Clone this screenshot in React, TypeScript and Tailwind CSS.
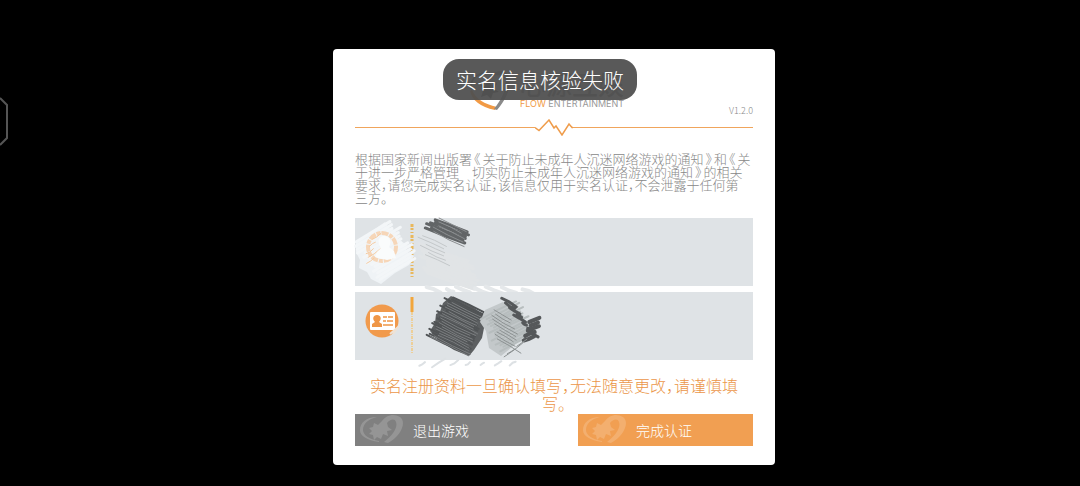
import React from 'react'

interface IScribble {
  points: [number, number, number, number][]
  color: string
  width: number
  seed: number
}

// Hand-drawn marker strokes: each band is x, y, length and slope
const Scribble = ({ points, color, width, seed }: IScribble) => {
  const noise = (n: number) => {
    const v = Math.sin(n * 12.9898 + seed) * 43758.5453
    return v - Math.floor(v)
  }

  return (
    <g stroke={color} strokeWidth={width} strokeLinecap="round" fill="none">
      {points.map(([x, y, length, slope], i) => {
        const start = x + noise(i) * 8 - 4
        const end = x + length + noise(i + 50) * 8 - 4
        const mid = (start + end) / 2
        return (
          <path
            key={i}
            d={`M${start} ${y + (start - x) * slope}L${mid} ${y + (mid - x) * slope + noise(i + 90) * 2 - 1}L${end} ${y + (end - x) * slope}`}
          />
        )
      })}
    </g>
  )
}

const bands = (
  count: number,
  x: number,
  y: number,
  stepX: number,
  stepY: number,
  length: number,
  slope: number
): [number, number, number, number][] =>
  Array.from({ length: count }, (_, i) => [x + i * stepX, y + i * stepY, length, slope])

const HeartMark = () => (
  <svg viewBox="0 0 46 32" className="h-8 w-[46px] shrink-0" aria-hidden="true">
    <g fill="#fff" fillOpacity=".17">
      <path d="M18 3C7 3 1 9 1 16c0 6 7 10 19 12v-1C10 25 4 21 4 16c0-6 5-11 14-13z" />
      <path d="M23 7c4-6 12-8 18-4 7 5 1 19-12 26l-4-1c9-7 14-15 12-20-1-4-6-3-9 1l1 4 4 3-5 1 1 5-5-2-2 5-4-2-3 3-1-5-4-1 3-3-3-3 4-1 1-4 4 2z" />
    </g>
  </svg>
)

const Logo = () => (
  <div className="flex items-start gap-2">
    <svg viewBox="0 0 44 42" className="h-[42px] w-[44px]" fill="none" aria-hidden="true">
      <path d="M2 22c2 9 10 16 25 19l2-3C16 35 8 30 4 21z" fill="#f19a45" />
      <path d="M22 4C9 3 2 10 3 20" stroke="#777" strokeWidth="2" />
      <path d="M21 8c6-7 15-8 19-2 5 9-1 24-11 35l-3-1c9-11 13-22 11-29-2-5-9-6-16-3z" fill="#8a8a8a" />
      <path d="M12 15l5 2 2-6 5 5 5-2-2 6 4 3-6 1-2 6-4-4-6 2 2-6z" fill="#555" />
    </svg>
    <div>
      <p className="text-[26px] leading-[30px] font-medium text-[#777]">心源互娱</p>
      <p className="text-[9px] leading-[10px] whitespace-nowrap font-[Inter,sans-serif] text-[#999]">
        <span className="text-[#f19a45]">FLOW</span> ENTERTAINMENT
      </p>
    </div>
  </div>
)

const Pulse = () => (
  <div className="flex items-center" aria-hidden="true">
    <span className="h-px flex-1 bg-[#f0a55c]" />
    <svg viewBox="0 0 38 17" className="h-[17px] w-[38px]" fill="none" stroke="#ef9c4b" strokeWidth="1.5">
      <path d="M0 8.500l4 3L14 1l5 8 2-2 6 9 7-11 3 3.500h1" />
    </svg>
    <span className="h-px flex-1 bg-[#f0a55c]" />
  </div>
)

const NameField = () => (
  <div className="relative h-[68px] bg-[#dfe3e6]">
    <input aria-label="姓名" className="h-full w-full bg-transparent pr-4 pl-[70px] text-base text-[#555] outline-none" />
    <svg viewBox="0 0 220 90" className="pointer-events-none absolute -top-2 -left-2.5 h-[90px] w-[220px]" aria-hidden="true">
      <path d="M67 14v55" stroke="#e9b85c" strokeWidth="3" strokeDasharray="3 1 2 2 1 2" />
      <path d="M11 32l29-20 4 6 6 2 3 9 9 6-1 6 8 5-5 9-14 8-14 11-10-5-4-7-8-4 1-8-4-8z" fill="#eff3f6" />
      <Scribble points={bands(14, 11, 32, 1.8, 2.9, 36, -0.6)} color="#f3f6f8" width={3} seed={2} />
      <circle cx="37" cy="37" r="14" fill="none" stroke="#f6d6b8" strokeWidth="4" strokeDasharray="7 1 4 1" />
      <Scribble points={bands(5, 25, 31, 0, 5, 7, -0.7)} color="#f5cba2" width={1} seed={21} />
      <path d="M39 26c6 0 8 6 5 11l5 4 2 7-9 2-12-3 2-5 4-4c-4-5-3-12 3-12z" fill="#fafcfc" />
      <Scribble points={bands(14, 75, 34, 0.5, 2.2, 50, 0.35)} color="#e1e4e6" width={3} seed={4} />
      <Scribble points={bands(6, 76, 25, 1, 4, 22, 0.45)} color="#c4c8ca" width={1} seed={9} />
      <Scribble points={bands(6, 88, 9, -1, 2, 36, 0.38)} color="#626567" width={3} seed={7} />
      <Scribble points={bands(5, 92, 7, 0, 4, 28, 0.5)} color="#8b8e90" width={1} seed={16} />
      <Scribble points={bands(7, 84, 78, 15, 0, 12, 0.4)} color="#e5e8ea" width={4} seed={3} />
    </svg>
  </div>
)

const IdCardField = () => (
  <div className="relative h-[68px] bg-[#dfe3e6]">
    <input aria-label="身份证号" className="h-full w-full bg-transparent pr-4 pl-[70px] text-base text-[#555] outline-none" />
    <svg viewBox="0 0 220 90" className="pointer-events-none absolute -top-2 -left-2.5 h-[90px] w-[220px]" aria-hidden="true">
      <circle cx="37" cy="37" r="16.5" fill="#f19a4c" />
      <rect x="25" y="28" width="25" height="18" rx="1" fill="#fff" />
      <path d="M32 31c4 0 5 4 2 7l3 2v3H27v-3l3-2c-3-3-2-7 2-7z" fill="#ef9646" />
      <path d="M38 33h4m1 0h5M38 37h3m1 0h6M38 41h10" stroke="#ef9646" strokeWidth="1.5" />
      <path d="M45 50l8-7m-5 7l6-8" stroke="#eee2d5" strokeWidth="2" />
      <path d="M67 13v15" stroke="#f2a63c" strokeWidth="3" />
      <path d="M67 28v42" stroke="#edcf99" strokeWidth="2" strokeDasharray="3 1 1 1" />
      <Scribble points={bands(7, 74, 82, 15, 0, 9, -0.65)} color="#dde1e4" width={2} seed={1} />
      <path d="M106 12l13 7 9 4 8 6 6 3-3 12-2 10-8 12-5 6-15-6-16-10-8-9 5-8 1-9 4-2 3-9z" fill="#5c5f61" />
      <Scribble points={bands(22, 105, 12, -1, 1.900, 35, 0.48)} color="#505355" width={2} seed={5} />
      <Scribble points={bands(18, 104, 17, -0.9, 2.200, 32, 0.5)} color="#7b7e80" width={1} seed={8} />
      <path d="M140 26l18-8 8 5 5 8 8 5 9 9-12 10-9 8-11 9-12-8-3-17-6-9z" fill="#c3c8ca" />
      <Scribble points={bands(15, 138, 34, 1.400, 2.300, 32, -0.5)} color="#b7bdbe" width={2} seed={6} />
      <Scribble points={bands(8, 158, 15, 3.500, 4.500, 10, 0.6)} color="#55585a" width={3} seed={12} />
      <Scribble points={bands(5, 184, 38, -1, 4.500, 9, -0.4)} color="#55585a" width={4} seed={14} />
      <Scribble points={bands(9, 146, 24, 1, 4, 20, 0.6)} color="#8d9293" width={1} seed={11} />
      <Scribble points={bands(3, 156, 75, 6, -5, 12, -0.7)} color="#8d9293" width={1} seed={18} />
    </svg>
  </div>
)

const Toast = ({ message }: { message: string }) => (
  <div
    role="status"
    className="absolute inset-x-0 top-2.5 flex justify-center pr-7"
  >
    <span className="rounded-2xl bg-[#505050]/95 px-[13px] py-2 text-[21px] leading-[25px] font-light whitespace-nowrap text-white">
      {message}
    </span>
  </div>
)

const App = () => {
  return (
    <div className="relative min-h-screen bg-black pt-[49px] pb-5 pl-7 font-['Noto_Sans_CJK_SC',sans-serif]">
      <svg viewBox="0 0 9 50" className="absolute top-[96px] left-0 h-[50px] w-[9px]" fill="none" aria-hidden="true">
        <path d="M0 2l7 7v33l-7 7" stroke="#555" strokeWidth="2" />
      </svg>

      <main className="relative mx-auto w-full max-w-[442px] rounded-sm bg-white px-[22px] pt-5 pb-[19px]">
        <header className="relative flex h-[50px] justify-center pr-4">
          <Logo />
          <span className="absolute right-0 bottom-0 text-[9px] leading-4 font-light text-[#888]">V1.2.0</span>
        </header>
        <Pulse />

        <p className="mt-4 h-[54px] text-[13px] leading-[13px] font-light whitespace-nowrap text-[#888] [font-feature-settings:'halt']">
          根据国家新闻出版署<span className="mx-0.5">《</span>关于防止未成年人沉迷网络游戏的通知<span className="mx-0.5">》</span>和<span className="mx-0.5">《</span>关
          <br />
          于进一步严格管理　切实防止未成年人沉迷网络游戏的通知<span className="mx-0.5">》</span>的相关
          <br />
          要求，请您完成实名认证，该信息仅用于实名认证，不会泄露于任何第
          <br />
          三方。
        </p>

        <form className="mt-3" onSubmit={(e) => e.preventDefault()}>
          <div className="flex flex-col gap-[6px]">
            <NameField />
            <IdCardField />
          </div>

          <p className="mt-4 px-2.5 text-center text-base leading-[18px] font-light text-[#eb9648] [font-feature-settings:'halt']">
            实名注册资料一旦确认填写，无法随意更改，请谨慎填写。
          </p>

          <div className="mt-0.5 flex justify-between gap-12">
            <button type="button" className="flex h-8 flex-1 items-center gap-2 bg-[#808080] pl-1 text-sm font-light text-white">
              <HeartMark />
              退出游戏
            </button>
            <button type="submit" className="flex h-8 flex-1 items-center gap-2 bg-[#f19f52] pl-1 text-sm font-light text-white">
              <HeartMark />
              完成认证
            </button>
          </div>
        </form>

        <Toast message="实名信息核验失败" />
      </main>
    </div>
  )
}

export default App
